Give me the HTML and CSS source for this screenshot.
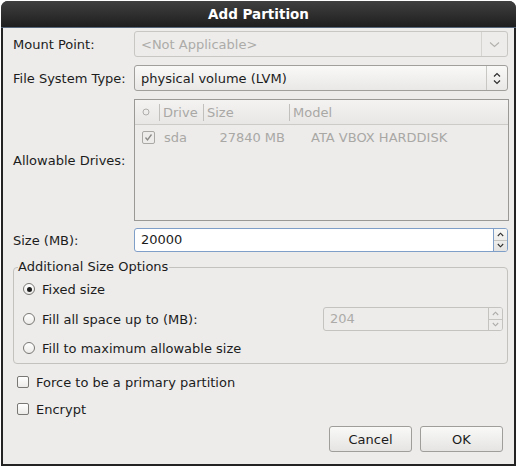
FILE: index.html
```html
<!DOCTYPE html>
<html lang="en">
<head>
    <meta charset="UTF-8">
    <title>Add Partition</title>
    <link rel="stylesheet" href="styles.css">
</head>
<body>
    <div class="window">
        <div class="titlebar">Add Partition</div>

        <div class="content">
            <!-- Mount point (disabled for LVM) -->
            <div class="row row-combo">
                <span class="lbl">Mount Point:</span>
                <div class="combo combo-disabled">
                    <span class="combo-text">&lt;Not Applicable&gt;</span>
                    <span class="combo-btn">
                        <svg width="11" height="7" viewBox="0 0 11 7"><polyline points="1,1.5 5.5,5.5 10,1.5" fill="none" stroke="#b3b1ad" stroke-width="1.1"/></svg>
                    </span>
                </div>
            </div>

            <div class="row row-combo">
                <span class="lbl">File System Type:</span>
                <div class="combo">
                    <span class="combo-text">physical volume (LVM)</span>
                    <span class="combo-btn combo-btn-fs">
                        <svg width="8" height="13" viewBox="0 0 8 13"><polyline points="1,4.5 4,1.5 7,4.5" fill="none" stroke="#2e2e2e" stroke-width="1.2"/><polyline points="1,8.5 4,11.5 7,8.5" fill="none" stroke="#2e2e2e" stroke-width="1.2"/></svg>
                    </span>
                </div>
            </div>

            <div class="row row-drives">
                <span class="lbl">Allowable Drives:</span>
                <div class="drives">
                    <div class="drives-head">
                        <span class="col col-check">
                            <svg width="8" height="8" viewBox="0 0 8 8"><circle cx="4" cy="4" r="3" fill="none" stroke="#b0aeab" stroke-width="1"/></svg>
                        </span>
                        <span class="col col-drive">Drive</span>
                        <span class="col col-size">Size</span>
                        <span class="col col-model">Model</span>
                    </div>
                    <div class="drives-row">
                        <span class="cell cell-check">
                            <span class="tick-box">
                                <svg width="9" height="9" viewBox="0 0 9 9"><polyline points="1.5,4.5 3.5,7 7.5,1.5" fill="none" stroke="#8c8a87" stroke-width="1.3"/></svg>
                            </span>
                        </span>
                        <span class="cell cell-drive">sda</span>
                        <span class="cell cell-size">27840 MB</span>
                        <span class="cell cell-model">ATA VBOX HARDDISK</span>
                    </div>
                </div>
            </div>

            <div class="row row-size">
                <span class="lbl">Size (MB):</span>
                <div class="spin spin-focus">
                    <span class="spin-text">20000</span>
                    <span class="spin-btns">
                        <span class="spin-up"><svg width="7" height="5" viewBox="0 0 7 5"><polyline points="0.8,4 3.5,1.2 6.2,4" fill="none" stroke="#2e2e2e" stroke-width="1.1"/></svg></span>
                        <span class="spin-down"><svg width="7" height="5" viewBox="0 0 7 5"><polyline points="0.8,1 3.5,3.8 6.2,1" fill="none" stroke="#2e2e2e" stroke-width="1.1"/></svg></span>
                    </span>
                </div>
            </div>

            <fieldset class="options">
                <legend>Additional Size Options</legend>

                <div class="opt">
                    <span class="radio radio-on"></span>
                    <span>Fixed size</span>
                </div>
                <div class="opt opt-fill">
                    <span class="radio"></span>
                    <span class="opt-label">Fill all space up to (MB):</span>
                    <div class="spin spin-disabled">
                        <span class="spin-text">204</span>
                        <span class="spin-btns">
                            <span class="spin-up"><svg width="7" height="5" viewBox="0 0 7 5"><polyline points="0.8,4 3.5,1.2 6.2,4" fill="none" stroke="#aeaca8" stroke-width="1.1"/></svg></span>
                            <span class="spin-down"><svg width="7" height="5" viewBox="0 0 7 5"><polyline points="0.8,1 3.5,3.8 6.2,1" fill="none" stroke="#aeaca8" stroke-width="1.1"/></svg></span>
                        </span>
                    </div>
                </div>
                <div class="opt">
                    <span class="radio"></span>
                    <span>Fill to maximum allowable size</span>
                </div>
            </fieldset>

            <div class="check check-first">
                <span class="box"></span>
                <span>Force to be a primary partition</span>
            </div>
            <div class="check">
                <span class="box"></span>
                <span>Encrypt</span>
            </div>

            <div class="buttons">
                <button type="button">Cancel</button>
                <button type="button">OK</button>
            </div>
        </div>
    </div>
</body>
</html>
```

FILE: styles.css
```css
body {
    margin: 0;
    background-color: #ffffff;
    font-family: "DejaVu Sans", sans-serif;
    font-size: 13px;
    color: #1c1c1c;
}

.window {
    width: 515px;
    height: 465px;
    margin: 1px 0 0 1px;
    padding: 0 2px 2px;
    box-sizing: border-box;
    background-color: #232323;
    border-radius: 7px 7px 0 0;
    display: flex;
    flex-direction: column;
}

.titlebar {
    flex: none;
    height: 27px;
    margin: 0 -2px;
    box-sizing: border-box;
    background: linear-gradient(#404040, #1e1e1e);
    border-bottom: 1px solid #56677c;
    border-radius: 7px 7px 0 0;
    color: #ffffff;
    font-weight: bold;
    font-size: 13.5px;
    line-height: 27px;
    text-align: center;
}

.content {
    flex: 1;
    background-color: #edeceb;
    padding: 3px 6px 0 10px;
}

/* label + control rows */
.row {
    display: flex;
    align-items: center;
    margin-bottom: 8px;
}

.lbl {
    width: 121px;
    flex: none;
}

.row-combo {
    height: 26px;
}

.row-drives {
    height: 122px;
    margin-bottom: 7px;
}

.row-size {
    height: 24px;
    margin-bottom: 0;
}

/* combo boxes */
.combo {
    flex: 1;
    height: 26px;
    box-sizing: border-box;
    display: flex;
    align-items: center;
    border: 1px solid #a19f9b;
    border-radius: 3px;
    background: linear-gradient(#f9f9f8, #e9e8e6);
}

.combo-text {
    flex: 1;
    padding-left: 6px;
}

.combo-btn {
    width: 26px;
    height: 100%;
    box-sizing: border-box;
    border-left: 1px solid #d6d4d0;
    display: flex;
    align-items: center;
    justify-content: center;
}

.combo-btn-fs {
    width: 21px;
    border-left-color: #c9c7c3;
}

.combo-disabled {
    background: #edeceb;
    border-color: #c9c7c3;
    color: #acaba8;
}

/* drives list */
.drives {
    flex: 1;
    height: 122px;
    box-sizing: border-box;
    border: 1px solid #9b9995;
    margin-right: -1px;
    color: #a9a8a5;
}

.drives-head {
    display: flex;
    height: 25px;
    box-sizing: border-box;
    border-bottom: 1px solid #cdcbc7;
    background: linear-gradient(#f4f3f2, #e8e7e5);
}

.col {
    display: flex;
    align-items: center;
    padding-left: 4px;
    position: relative;
}

.col + .col::before {
    content: "";
    position: absolute;
    left: 0;
    top: 4px;
    bottom: 3px;
    border-left: 1px solid #c2c0bc;
}

.col-check {
    width: 24px;
    box-sizing: border-box;
    padding-left: 7px;
}

.col-drive {
    width: 44px;
    box-sizing: border-box;
}

.col-size {
    width: 86px;
    box-sizing: border-box;
}

.drives-row {
    display: flex;
    align-items: center;
    height: 24px;
}

.cell-check {
    width: 24px;
    padding-left: 7px;
    box-sizing: border-box;
}

.tick-box {
    display: flex;
    align-items: center;
    justify-content: center;
    width: 11px;
    height: 11px;
    border: 1px solid #aaa8a4;
    border-radius: 2px;
}

.cell-drive {
    width: 44px;
    padding-left: 5px;
    box-sizing: border-box;
}

.cell-size {
    width: 86px;
    padding-right: 4px;
    box-sizing: border-box;
    text-align: right;
}

.cell-model {
    padding-left: 22px;
}

/* spin buttons */
.spin {
    flex: 1;
    height: 24px;
    box-sizing: border-box;
    display: flex;
    border: 1px solid #a19f9b;
    border-radius: 3px;
    background-color: #ffffff;
}

.spin-text {
    flex: 1;
    padding-left: 6px;
    line-height: 22px;
}

.spin-btns {
    width: 13px;
    display: flex;
    flex-direction: column;
    border-left: 1px solid #a19f9b;
    background: linear-gradient(#f7f7f6, #e4e3e1);
    border-radius: 0 2px 2px 0;
}

.spin-up,
.spin-down {
    flex: 1;
    display: flex;
    align-items: center;
    justify-content: center;
}

.spin-up {
    border-bottom: 1px solid #c6c4c0;
}

.spin-focus {
    border-color: #7f9ec8;
}

.spin-focus .spin-btns {
    border-left-color: #7f9ec8;
}

.spin-disabled {
    flex: none;
    width: 180px;
    background-color: #edeceb;
    border-color: #c5c3bf;
    color: #acaba8;
}

.spin-disabled .spin-btns {
    border-left-color: #c5c3bf;
    background: #edeceb;
}

/* additional size options frame */
.options {
    margin: 7px 0 0;
    padding: 2px 4px 3px 9px;
    border: 1px solid #c4c2be;
    border-radius: 4px;
}

.options legend {
    padding: 0 1px 0 0;
    margin-left: -5px;
    line-height: 16px;
}

.opt {
    display: flex;
    align-items: center;
    height: 24px;
    margin-bottom: 5px;
}

.opt:last-child {
    margin-bottom: 0;
}

.opt-label {
    flex: 1;
}

.opt-fill {
    margin-bottom: 5px;
    margin-top: 6px;
}

.radio {
    width: 12px;
    height: 12px;
    box-sizing: border-box;
    border: 1px solid #7a7874;
    border-radius: 50%;
    background: linear-gradient(#ffffff, #ecebe9);
    margin-right: 7px;
    display: flex;
    align-items: center;
    justify-content: center;
}

.radio-on::after {
    content: "";
    width: 5px;
    height: 5px;
    border-radius: 50%;
    background-color: #1e1e1e;
}

/* check boxes */
.check {
    display: flex;
    align-items: center;
    height: 24px;
    margin-top: 3px;
    padding-left: 4px;
}

.check-first {
    margin-top: 6px;
}

.box {
    width: 12px;
    height: 12px;
    box-sizing: border-box;
    border: 1px solid #7a7874;
    border-radius: 2px;
    background: linear-gradient(#ffffff, #ecebe9);
    margin-right: 7px;
}

/* dialog buttons */
.buttons {
    display: flex;
    justify-content: flex-end;
    gap: 8px;
    margin: 5px 5px 0 0;
}

button {
    width: 83px;
    height: 26px;
    border: 1px solid #a09e9a;
    border-radius: 3px;
    background: linear-gradient(#f9f9f8, #e5e4e2);
    font-family: "DejaVu Sans", sans-serif;
    font-size: 13px;
    color: #1c1c1c;
    padding: 0;
}
```
